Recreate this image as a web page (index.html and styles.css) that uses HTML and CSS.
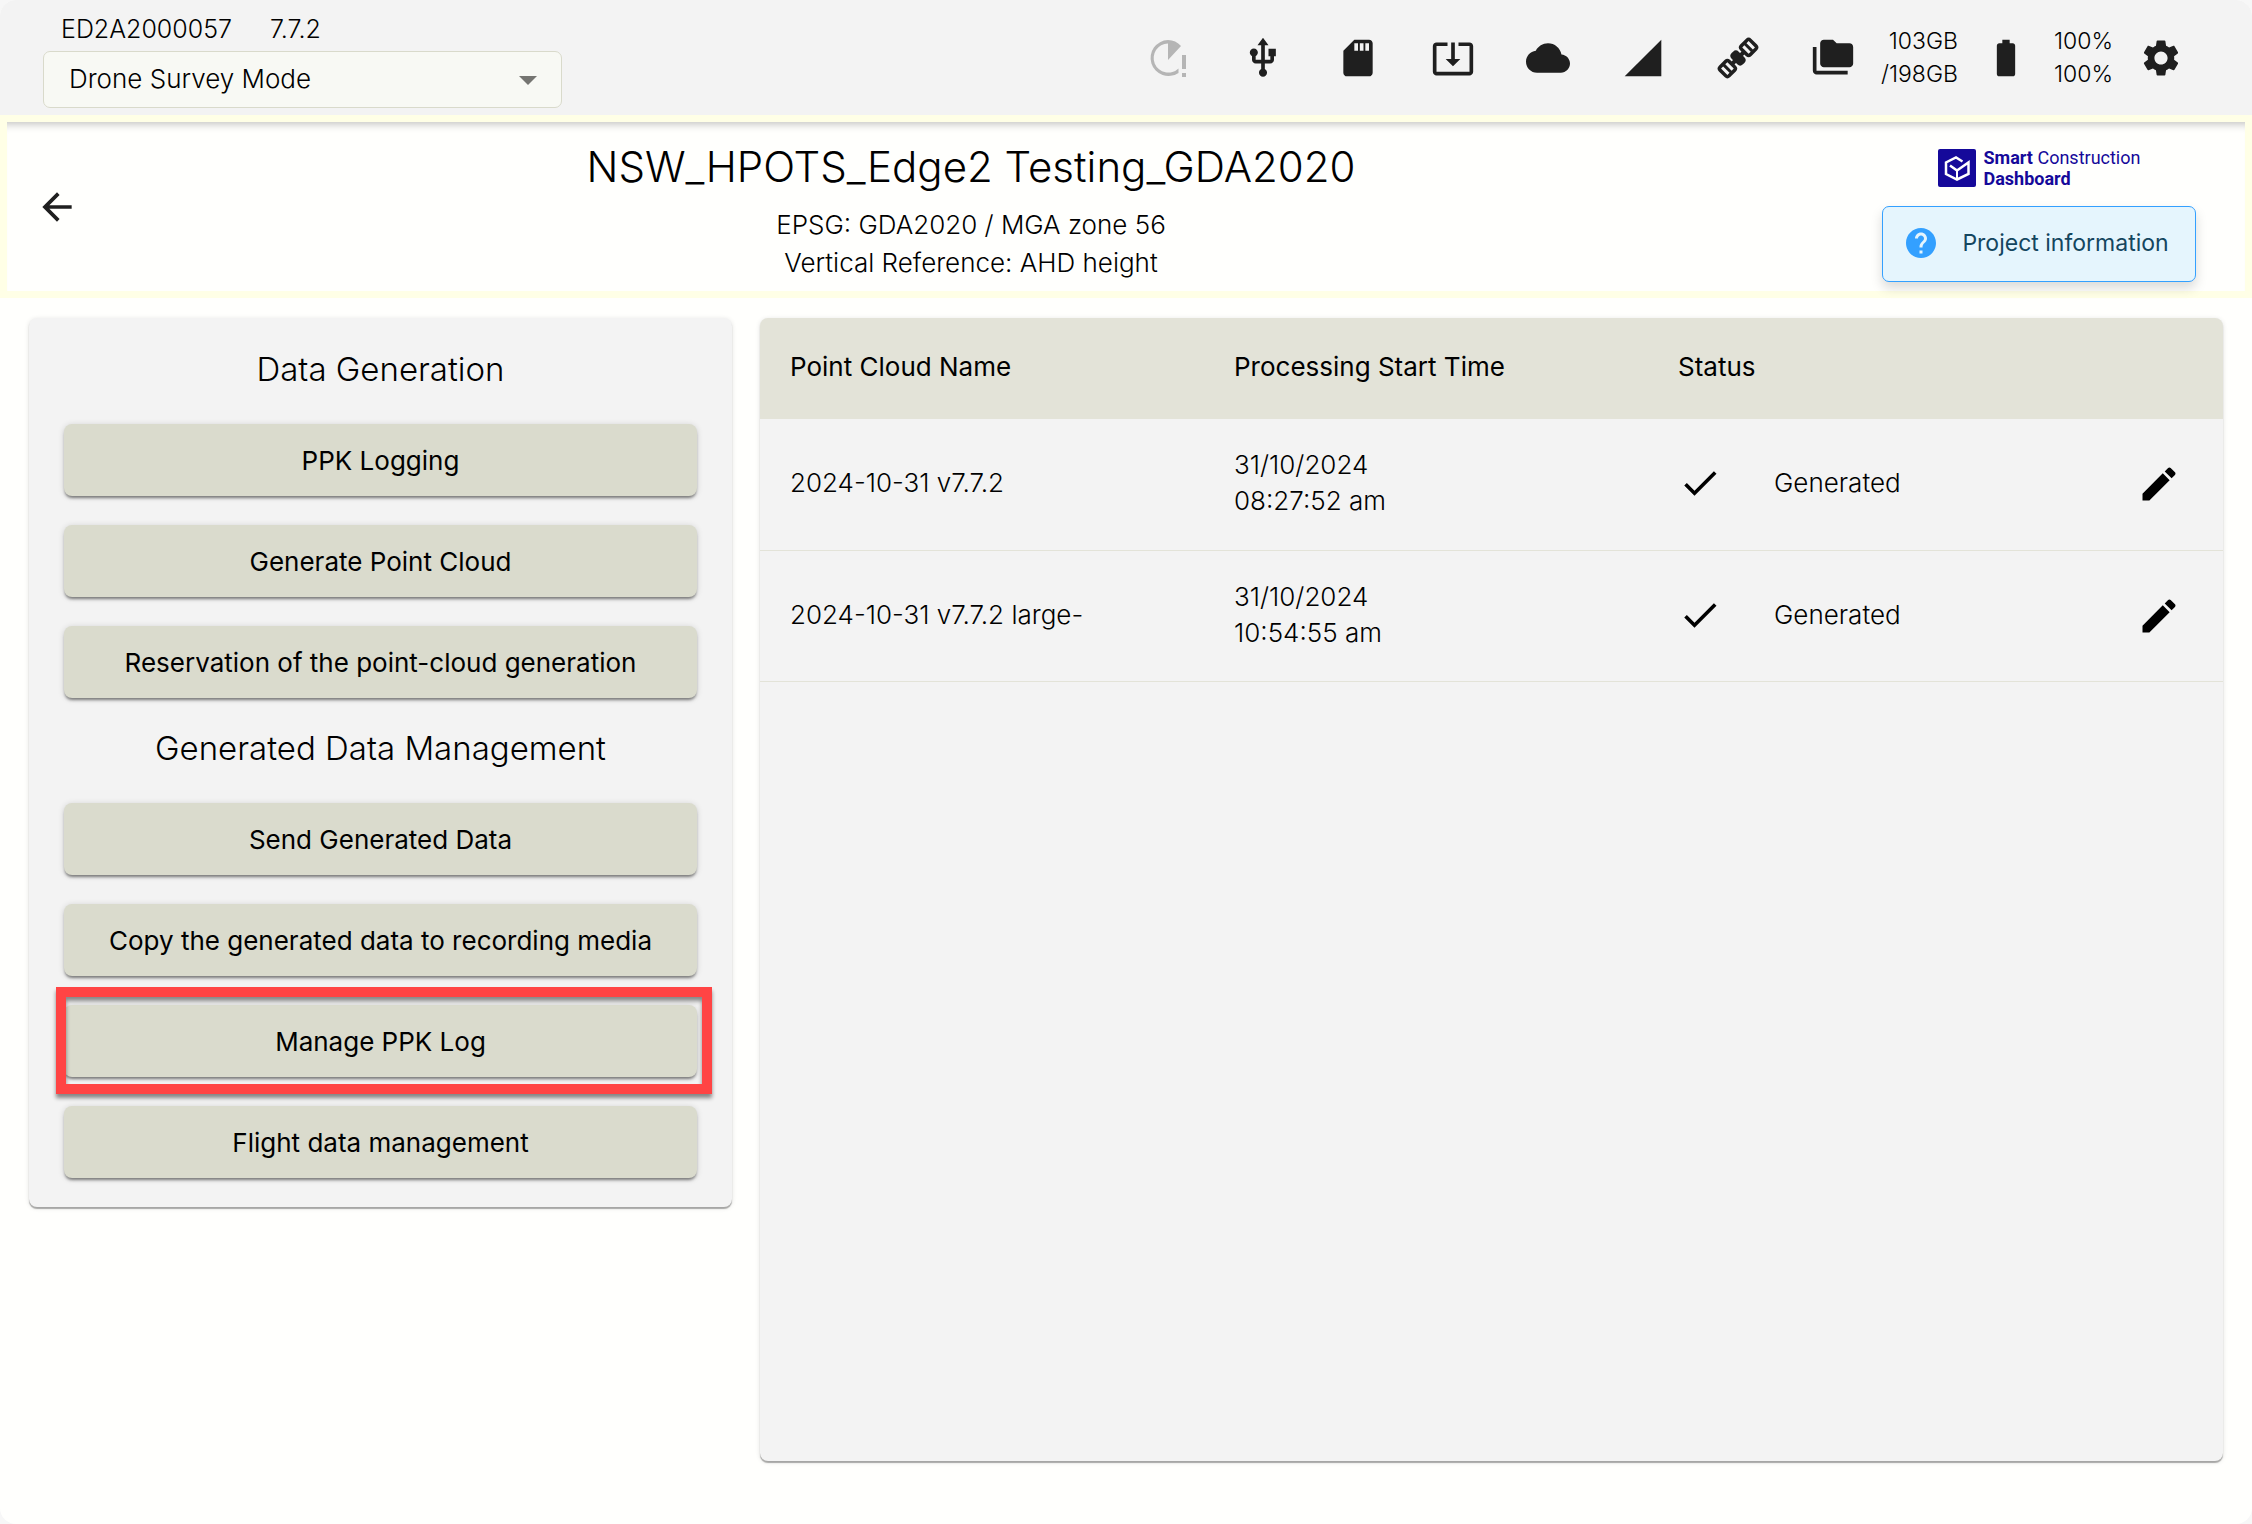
FILE: index.html
```html
<!DOCTYPE html>
<html lang="en">
<head>
    <meta charset="UTF-8">
    <meta name="viewport" content="width=device-width, initial-scale=1.0">
    <title>NSW_HPOTS_Edge2 Testing_GDA2020</title>
    <link rel="stylesheet" href="styles.css">
</head>
<body>
    <div class="app">
        <!-- Status bar -->
        <div class="topbar">
            <div class="device">
                <div class="device-info">
                    <span>ED2A2000057</span>
                    <span>7.7.2</span>
                </div>
                <div class="mode">
                    <select class="mode-select" aria-label="Mode">
                        <option>Drone Survey Mode</option>
                    </select>
                    <svg class="mode-arrow" viewBox="0 0 18 9"><path d="M0 0h18L9 9z"/></svg>
                </div>
            </div>
            <div class="status">
                <div class="status-icons">
                    <svg class="icon icon-off" viewBox="0 0 44 44">
                        <path d="M22 4a18 18 0 0 1 13 6L22 24V7.400a14.600 14.600 0 1 0 10.500 25V37A18 18 0 1 1 22 4z"/>
                        <path d="M36 19h4v14h-4zM36 37h4v4h-4z"/>
                    </svg>
                    <svg class="icon" viewBox="0 0 24 24"><path d="M15 7v4h1v2h-3V5h2l-3-4-3 4h2v8H8v-2.070c.7-.37 1.200-1.080 1.200-1.930 0-1.210-.99-2.200-2.200-2.200S4.800 7.790 4.800 9c0 .85.5 1.560 1.200 1.930V13c0 1.110.89 2 2 2h3v3.050c-.71.37-1.200 1.100-1.200 1.950 0 1.220.99 2.200 2.200 2.200s2.200-.98 2.200-2.200c0-.85-.49-1.580-1.200-1.950V15h3c1.110 0 2-.89 2-2v-2h1V7h-4z"/></svg>
                    <svg class="icon" viewBox="0 0 24 24"><path d="M18 2h-8L4.020 8 4 20c0 1.100.9 2 2 2h12c1.100 0 2-.9 2-2V4c0-1.100-.9-2-2-2zm-6 6h-2V4h2v4zm3 0h-2V4h2v4zm3 0h-2V4h2v4z"/></svg>
                    <svg class="icon" viewBox="0 0 24 24"><path d="M12 16.500l4-4h-3v-9h-2v9H8l4 4zm9-13h-6v1.990h6v14.030H3V5.490h6V3.500H3c-1.100 0-2 .9-2 2v14c0 1.100.9 2 2 2h18c1.100 0 2-.9 2-2v-14c0-1.100-.9-2-2-2z"/></svg>
                    <svg class="icon" viewBox="0 0 24 24"><path d="M19.350 10.040C18.670 6.590 15.640 4 12 4 9.110 4 6.600 5.640 5.350 8.040 2.340 8.360 0 10.910 0 14c0 3.310 2.690 6 6 6h13c2.760 0 5-2.240 5-5 0-2.640-2.050-4.780-4.650-4.960z"/></svg>
                    <svg class="icon" viewBox="0 0 24 24"><path d="M2 22h20V2z"/></svg>
                    <svg class="icon" viewBox="0 0 44 44">
                        <g transform="rotate(-45 22 22)">
                            <path d="M10 20h24v4H10z"/>
                            <rect x="-1" y="14" width="16" height="16" rx="4"/>
                            <rect x="29" y="14" width="16" height="16" rx="4"/>
                            <rect x="17" y="14" width="10" height="16" rx="4"/>
                            <path class="slot" d="M2.500 17.500h3v9h-3zM8.500 17.500h3v9h-3zM32.500 17.500h3v9h-3zM38.500 17.500h3v9h-3z"/>
                        </g>
                    </svg>
                    <svg class="icon" viewBox="0 0 24 24"><path d="M3 6H1v13c0 1.100.9 2 2 2h17v-2H3V6z"/><path d="M21 4h-7l-2-2H7c-1.100 0-2 .9-2 2v11c0 1.100.9 2 2 2h14c1.100 0 2-.9 2-2V6c0-1.100-.9-2-2-2z"/></svg>
                </div>
                <div class="usage">103GB<br>/198GB</div>
                <svg class="icon" viewBox="0 0 24 24"><path d="M15.670 4H14V2h-4v2H8.330C7.600 4 7 4.600 7 5.330v15.330C7 21.400 7.600 22 8.330 22h7.330c.74 0 1.340-.6 1.340-1.330V5.330C17 4.600 16.400 4 15.670 4z"/></svg>
                <div class="usage">100%<br>100%</div>
                <button class="icon-button" aria-label="Settings">
                    <svg class="icon" viewBox="0 0 24 24"><path d="M19.140 12.940c.04-.3.06-.61.06-.94 0-.32-.02-.64-.07-.94l2.030-1.580c.18-.14.23-.41.12-.61l-1.920-3.320c-.12-.22-.37-.29-.59-.22l-2.390.96c-.5-.38-1.030-.7-1.620-.94l-.36-2.540c-.04-.24-.24-.41-.48-.41h-3.840c-.24 0-.43.17-.47.41l-.36 2.540c-.59.24-1.130.57-1.620.94l-2.390-.96c-.22-.08-.47 0-.59.22L2.740 8.870c-.12.21-.08.47.12.61l2.030 1.580c-.05.3-.09.63-.09.94s.02.64.07.94l-2.030 1.580c-.18.14-.23.41-.12.61l1.920 3.320c.12.22.37.29.59.22l2.390-.96c.5.38 1.030.7 1.620.94l.36 2.540c.05.24.24.41.48.41h3.840c.24 0 .44-.17.47-.41l.36-2.540c.59-.24 1.130-.56 1.620-.94l2.390.96c.22.08.47 0 .59-.22l1.920-3.320c.12-.22.07-.47-.12-.61l-2.010-1.580zM12 15.600c-1.980 0-3.600-1.620-3.600-3.600s1.620-3.600 3.600-3.600 3.600 1.620 3.600 3.600-1.620 3.600-3.600 3.600z"/></svg>
                </button>
            </div>
        </div>

        <!-- Project header -->
        <div class="project">
            <button class="icon-button back" aria-label="Back">
                <svg class="icon" viewBox="0 0 24 24"><path d="M20 11H7.830l5.590-5.590L12 4l-8 8 8 8 1.410-1.410L7.830 13H20v-2z"/></svg>
            </button>
            <div class="project-text">
                <h1>NSW_HPOTS_Edge2 Testing_GDA2020</h1>
                <p>EPSG: GDA2020 / MGA zone 56</p>
                <p>Vertical Reference: AHD height</p>
            </div>
            <div class="project-side">
                <div class="logo">
                    <svg class="logo-mark" viewBox="0 0 38 38">
                        <rect width="38" height="38" rx="2" fill="#15099a"/>
                        <path d="M24.500 12.500L18 8.500 8 13.500V25l11 5.500L30.500 25V13.500L19 21.500l-7-5" fill="none" stroke="#fff" stroke-width="2.500"/>
                        <path d="M19 21v9" stroke="#fff" stroke-width="2"/>
                    </svg>
                    <div class="logo-text"><b>Smart</b> Construction<br><b>Dashboard</b></div>
                </div>
                <button class="info-button">
                    <svg class="icon-help" viewBox="2 2 20 20"><path d="M12 2C6.480 2 2 6.480 2 12s4.480 10 10 10 10-4.480 10-10S17.520 2 12 2zm1 17h-2v-2h2v2zm2.070-7.750l-.9.920C13.450 12.900 13 13.500 13 15h-2v-.5c0-1.100.45-2.100 1.170-2.830l1.240-1.260c.37-.36.59-.86.59-1.410 0-1.100-.9-2-2-2s-2 .9-2 2H8c0-2.210 1.790-4 4-4s4 1.790 4 4c0 .88-.36 1.680-.93 2.250z"/></svg>
                    Project information
                </button>
            </div>
        </div>

        <div class="content">
            <!-- Menu -->
            <div class="card menu">
                <h2>Data Generation</h2>
                <div class="menu-group">
                    <button class="menu-button">PPK Logging</button>
                    <button class="menu-button">Generate Point Cloud</button>
                    <button class="menu-button">Reservation of the point-cloud generation</button>
                </div>
                <h2>Generated Data Management</h2>
                <div class="menu-group">
                    <button class="menu-button">Send Generated Data</button>
                    <button class="menu-button">Copy the generated data to recording media</button>
                    <div class="highlight">
                        <button class="menu-button">Manage PPK Log</button>
                    </div>
                    <button class="menu-button">Flight data management</button>
                </div>
            </div>

            <!-- Point clouds -->
            <div class="card clouds">
                <table>
                    <thead>
                        <tr>
                            <th>Point Cloud Name</th>
                            <th>Processing Start Time</th>
                            <th colspan="2">Status</th>
                        </tr>
                    </thead>
                    <tbody>
                        <tr>
                            <td class="col-name">2024-10-31 v7.7.2</td>
                            <td class="col-time">31/10/2024<br>08:27:52 am</td>
                            <td>
                                <div class="state">
                                    <svg class="icon" viewBox="0 0 24 24"><path d="M9 16.170L4.830 12l-1.420 1.410L9 19 21 7l-1.410-1.410z"/></svg>
                                    Generated
                                </div>
                            </td>
                            <td class="col-edit">
                                <button class="icon-button" aria-label="Edit">
                                    <svg class="icon" viewBox="0 0 24 24"><path d="M3 17.250V21h3.750L17.810 9.940l-3.750-3.750L3 17.250zM20.710 7.040c.39-.39.39-1.020 0-1.410l-2.340-2.340c-.39-.39-1.020-.39-1.410 0l-1.830 1.830 3.750 3.750 1.830-1.830z"/></svg>
                                </button>
                            </td>
                        </tr>
                        <tr>
                            <td class="col-name">2024-10-31 v7.7.2 large-</td>
                            <td class="col-time">31/10/2024<br>10:54:55 am</td>
                            <td>
                                <div class="state">
                                    <svg class="icon" viewBox="0 0 24 24"><path d="M9 16.170L4.830 12l-1.420 1.410L9 19 21 7l-1.410-1.410z"/></svg>
                                    Generated
                                </div>
                            </td>
                            <td class="col-edit">
                                <button class="icon-button" aria-label="Edit">
                                    <svg class="icon" viewBox="0 0 24 24"><path d="M3 17.250V21h3.750L17.810 9.940l-3.750-3.750L3 17.250zM20.710 7.040c.39-.39.39-1.020 0-1.410l-2.340-2.340c-.39-.39-1.020-.39-1.410 0l-1.830 1.830 3.750 3.750 1.830-1.830z"/></svg>
                                </button>
                            </td>
                        </tr>
                    </tbody>
                </table>
            </div>
        </div>
    </div>
</body>
</html>
```
FILE: styles.css
```css
/* General Styling */
* {
    box-sizing: border-box;
}
body {
    margin: 0;
    background: #f7f7f7;
    color: #000;
    font-family: Inter, "Liberation Sans", sans-serif;
    font-size: 26px;
    font-weight: 300;
}
button, select {
    font: inherit;
    color: inherit;
}
h1, h2, p {
    margin: 0;
    font-weight: 300;
}
.app {
    min-height: 100vh;
    display: flex;
    flex-direction: column;
    background: #fffffd;
    border-radius: 16px;
    overflow: hidden;
}
.icon {
    display: block;
    width: 44px;
    height: 44px;
    flex: none;
    fill: #1f1f1f;
    overflow: visible;
}
.icon-off {
    fill: #b5b5b5;
}
.slot {
    fill: #f3f3f3;
}
.icon-button {
    padding: 0;
    border: none;
    background: none;
    cursor: pointer;
}

/* Status bar */
.topbar {
    display: flex;
    justify-content: space-between;
    align-items: center;
    padding: 12px 69px 7px 43px;
    background: #f3f3f3;
}
.device {
    width: 519px;
}
.device-info {
    display: flex;
    gap: 38px;
    padding-left: 18px;
    margin-bottom: 5px;
    font-size: 25px;
    line-height: 34px;
}
.mode {
    position: relative;
}
.mode-select {
    display: block;
    width: 100%;
    height: 57px;
    padding: 0 25px 3px;
    border: 1px solid #d9dacb;
    border-radius: 7px;
    background: #f8f9f4;
    appearance: none;
}
.mode-arrow {
    position: absolute;
    right: 25px;
    top: 25px;
    width: 18px;
    height: 9px;
    fill: #757571;
    pointer-events: none;
}
.status, .status-icons {
    display: flex;
    align-items: center;
}
.status {
    gap: 26px;
    padding-bottom: 5px;
}
.status-icons {
    gap: 51px;
}
.usage {
    font-size: 23px;
    line-height: 33px;
    text-align: right;
}

/* Project header */
.project {
    display: grid;
    grid-template-columns: 89px 1fr 399px;
    border: 7px solid #ffffe6;
    box-shadow: inset 0 10px 9px -8px rgba(0, 0, 0, 0.25);
}
.back {
    align-self: center;
    justify-self: end;
    padding-right: 17px;
}
.project-text {
    padding: 16px 0 9px;
    text-align: center;
    line-height: 38px;
}
.project-text h1 {
    font-size: 42px;
    line-height: 58px;
    margin-bottom: 10px;
}
.project-side {
    display: flex;
    flex-direction: column;
    align-items: center;
    gap: 17px;
    padding: 25px 13px 9px 0;
}
.logo {
    display: flex;
    align-items: center;
    gap: 8px;
    color: #15099a;
}
.logo-mark {
    width: 38px;
    height: 38px;
}
.logo-text {
    font-family: Roboto, sans-serif;
    font-size: 18px;
    font-weight: 400;
    line-height: 21px;
    text-align: left;
}
.info-button {
    display: flex;
    align-items: center;
    gap: 26px;
    height: 76px;
    padding: 0 26px 2px 23px;
    border: 1px solid #33a0ff;
    border-radius: 7px;
    background: #e5f5fd;
    box-shadow: 0 6px 12px rgba(0, 0, 0, 0.15);
    color: #14465f;
    font-size: 23px;
    font-weight: 400;
    cursor: pointer;
}
.icon-help {
    width: 30px;
    height: 30px;
    fill: #33a0ff;
}

/* Cards */
.content {
    flex: 1;
    display: flex;
    gap: 28px;
    padding: 20px 29px 63px;
}
.card {
    border-radius: 8px;
    background: #f3f3f3;
    box-shadow: 0 2px 1px rgba(0, 0, 0, 0.3), 0 1px 5px rgba(0, 0, 0, 0.12);
}
.menu {
    width: 703px;
    flex: none;
    align-self: flex-start;
    padding: 27px 35px 29px;
}
.menu h2 {
    font-size: 33px;
    line-height: 48px;
    text-align: center;
}
.menu-group {
    display: flex;
    flex-direction: column;
    gap: 29px;
    padding: 31px 0 26px;
}
.menu-group:last-child {
    padding-bottom: 0;
}
.menu-button {
    width: 100%;
    height: 72px;
    border: none;
    border-radius: 8px;
    background: #dadbcd;
    box-shadow: 0 3px 3px -1px rgba(0, 0, 0, 0.45), 0 1px 6px rgba(0, 0, 0, 0.15);
    font-weight: 400;
    cursor: pointer;
}

/* Red frame around the highlighted entry */
.highlight {
    position: relative;
}
.highlight::after {
    content: "";
    position: absolute;
    inset: -18px -15px -17px -8px;
    border: 10px solid #ff4444;
    box-shadow: 0 4px 4px rgba(0, 0, 0, 0.45), inset 0 4px 4px rgba(0, 0, 0, 0.45);
    pointer-events: none;
}

/* Point cloud table */
.clouds {
    flex: 1;
    overflow: hidden;
}
table {
    width: 100%;
    border-collapse: collapse;
    text-align: left;
    line-height: 36px;
}
th {
    height: 101px;
    padding: 0 30px 4px;
    background: #e3e3d8;
    font-weight: 400;
}
td {
    height: 131px;
    padding: 0 30px 2px;
    border-bottom: 1px solid #e3e3d8;
}
.col-name, .col-time {
    width: 444px;
}
.state {
    display: flex;
    align-items: center;
    gap: 52px;
}
.col-edit {
    width: 120px;
    padding: 0 42px 0 0;
}
.col-edit .icon-button {
    margin-left: auto;
    display: block;
}
td .icon {
    fill: #000;
}
```
